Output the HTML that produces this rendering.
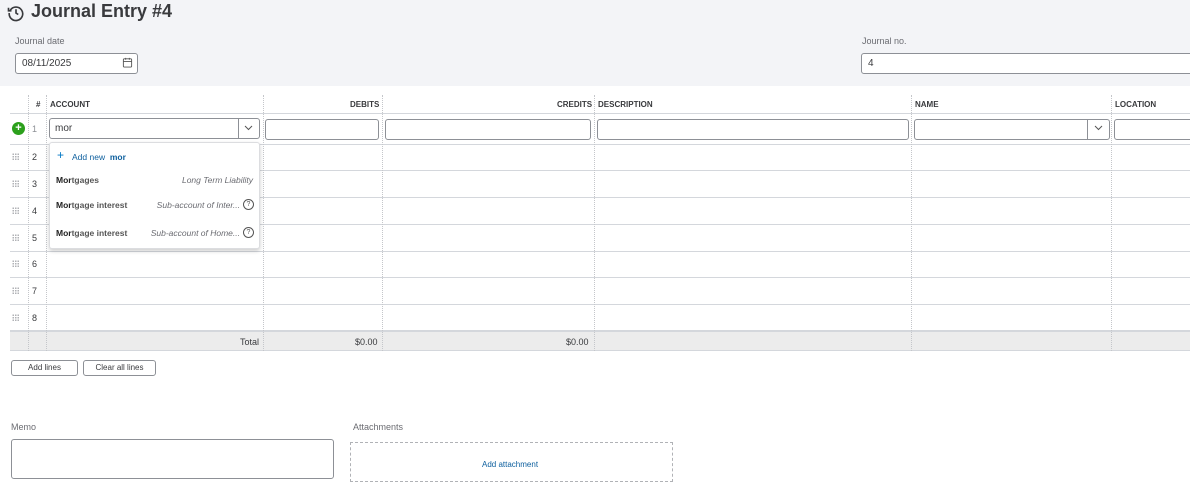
<!DOCTYPE html>
<html><head><style>
*{box-sizing:border-box;margin:0;padding:0}
body{width:1190px;height:473px;overflow:hidden;background:#fff;font-family:"Liberation Sans",sans-serif;color:#393a3d;position:relative}
.a{position:absolute}
.hdr{left:0;top:0;width:1190px;height:86px;background:#f3f4f7}
.lbl{font-size:9px;color:#6b6c72}
.inp{border:1px solid #8d9096;border-radius:3px;background:#fff;font-size:10px;padding-left:6px;line-height:20px}
.vl{width:0;border-left:1px dotted #c4c6ca}
.hl{height:0;border-top:1px solid #d4d7dc;left:10px;width:1180px}
.th{font-size:8px;font-weight:bold;color:#393a3d;top:100px}
.num{font-size:9px;left:32px}
.grip{left:12px;width:7px;height:7px;background-image:radial-gradient(#b0b2b6 0.8px,transparent 0.9px);background-size:2.5px 2.5px}
.btn{border:1px solid #8d9096;border-radius:3px;font-size:8px;text-align:center;line-height:14px;height:16px;color:#393a3d;background:#fff}
.dd{left:49px;top:142px;width:211px;height:107px;background:#fff;border:1px solid #dcdde0;border-radius:3px;box-shadow:0 2px 4px rgba(0,0,0,.2)}
.it{font-size:8.5px;left:6px;font-weight:bold;color:#555}
.it b{color:#222}
.sub{font-size:8.5px;font-style:italic;color:#6b6c72}
.q{width:11px;height:11px;border:1px solid #555;border-radius:50%;font-size:7px;text-align:center;line-height:9px;color:#555}
</style></head><body>
<div class="a hdr"></div>
<svg class="a" style="left:7px;top:4px" width="18" height="18" viewBox="0 0 24 24" fill="none" stroke="#393a3d" stroke-width="2.2"><path d="M4.5 8A9 9 0 1 1 3 12"/><path d="M2 5v4h4"/><path d="M12 7v5l3 2"/></svg>
<div class="a" style="left:31px;top:1px;font-size:18px;font-weight:bold;color:#393a3d">Journal Entry #4</div>
<div class="a lbl" style="left:15px;top:36px">Journal date</div>
<div class="a inp" style="left:15px;top:53px;width:123px;height:21px">08/11/2025</div>
<svg class="a" style="left:122px;top:57px" width="11" height="11" viewBox="0 0 12 12" fill="none" stroke="#555" stroke-width="1"><rect x="1.5" y="2" width="9" height="9" rx="1"/><path d="M1.5 5h9M4 1v2M8 1v2"/></svg>
<div class="a lbl" style="left:862px;top:36px">Journal no.</div>
<div class="a inp" style="left:861px;top:53px;width:340px;height:21px">4</div>

<div class="a hl" style="top:113px"></div>
<div class="a hl" style="top:144px"></div>
<div class="a hl" style="top:170px"></div>
<div class="a hl" style="top:197px"></div>
<div class="a hl" style="top:224px"></div>
<div class="a hl" style="top:251px"></div>
<div class="a hl" style="top:277px"></div>
<div class="a hl" style="top:304px"></div>
<div class="a" style="left:10px;top:330px;width:1180px;height:21px;background:#ececec;border-top:2px solid #d4d7dc;border-bottom:1px solid #d4d7dc"></div>
<div class="a vl" style="left:28px;top:95px;height:256px"></div>
<div class="a vl" style="left:46px;top:95px;height:256px"></div>
<div class="a vl" style="left:263px;top:95px;height:256px"></div>
<div class="a vl" style="left:382px;top:95px;height:256px"></div>
<div class="a vl" style="left:594px;top:95px;height:256px"></div>
<div class="a vl" style="left:911px;top:95px;height:256px"></div>
<div class="a vl" style="left:1111px;top:95px;height:256px"></div>

<div class="a th" style="left:36px">#</div>
<div class="a th" style="left:50px">ACCOUNT</div>
<div class="a th" style="left:350px">DEBITS</div>
<div class="a th" style="left:557px">CREDITS</div>
<div class="a th" style="left:598px">DESCRIPTION</div>
<div class="a th" style="left:915px">NAME</div>
<div class="a th" style="left:1115px">LOCATION</div>

<div class="a" style="left:12px;top:122px;width:13px;height:13px;border-radius:50%;background:#2ca01c;color:#fff;font-size:11px;font-weight:bold;text-align:center;line-height:13px">+</div>
<div class="a num" style="top:124px;color:#8d9096">1</div>
<div class="a inp" style="left:49px;top:118px;width:211px;height:21px;padding-left:5px">mor</div>
<div class="a" style="left:238px;top:119px;width:1px;height:19px;background:#8d9096"></div>
<svg class="a" style="left:244px;top:125px" width="9" height="6" viewBox="0 0 9 6" fill="none" stroke="#555"><path d="M1 1l3.5 3.5L8 1"/></svg>
<div class="a inp" style="left:265px;top:119px;width:114px;height:21px"></div>
<div class="a inp" style="left:385px;top:119px;width:206px;height:21px"></div>
<div class="a inp" style="left:597px;top:119px;width:312px;height:21px"></div>
<div class="a inp" style="left:914px;top:119px;width:196px;height:21px"></div>
<div class="a" style="left:1087px;top:120px;width:1px;height:19px;background:#8d9096"></div>
<svg class="a" style="left:1094px;top:125px" width="9" height="6" viewBox="0 0 9 6" fill="none" stroke="#555"><path d="M1 1l3.5 3.5L8 1"/></svg>
<div class="a inp" style="left:1114px;top:119px;width:90px;height:21px"></div>

<div class="a grip" style="top:153px"></div><div class="a num" style="top:152px">2</div>
<div class="a grip" style="top:180px"></div><div class="a num" style="top:179px">3</div>
<div class="a grip" style="top:207px"></div><div class="a num" style="top:206px">4</div>
<div class="a grip" style="top:234px"></div><div class="a num" style="top:233px">5</div>
<div class="a grip" style="top:260px"></div><div class="a num" style="top:259px">6</div>
<div class="a grip" style="top:287px"></div><div class="a num" style="top:286px">7</div>
<div class="a grip" style="top:314px"></div><div class="a num" style="top:313px">8</div>

<div class="a" style="left:240px;top:337px;font-size:9px">Total</div>
<div class="a" style="left:355px;top:337px;font-size:9px">$0.00</div>
<div class="a" style="left:566px;top:337px;font-size:9px">$0.00</div>

<div class="a dd">
<div class="a" style="left:7px;top:6px;font-size:12px;color:#0077c5;line-height:12px">+</div>
<div class="a" style="left:22px;top:9px;font-size:8.5px;color:#0d5f9e">Add new &nbsp;<b>mor</b></div>
<div class="a it" style="top:32px"><b>Mor</b>tgages</div>
<div class="a sub" style="right:6px;top:32px">Long Term Liability</div>
<div class="a it" style="top:57px"><b>Mor</b>tgage interest</div>
<div class="a sub" style="right:19px;top:57px">Sub-account of Inter...</div>
<div class="a q" style="right:5px;top:56px">?</div>
<div class="a it" style="top:85px"><b>Mor</b>tgage interest</div>
<div class="a sub" style="right:19px;top:85px">Sub-account of Home...</div>
<div class="a q" style="right:5px;top:84px">?</div>
</div>

<div class="a btn" style="left:11px;top:360px;width:67px">Add lines</div>
<div class="a btn" style="left:83px;top:360px;width:73px">Clear all lines</div>

<div class="a lbl" style="left:11px;top:422px">Memo</div>
<div class="a" style="left:11px;top:439px;width:323px;height:40px;border:1px solid #8d9096;border-radius:3px"></div>
<div class="a lbl" style="left:353px;top:422px">Attachments</div>
<div class="a" style="left:350px;top:442px;width:323px;height:40px;border:1px dashed #b0b2b6"></div>
<div class="a" style="left:482px;top:460px;font-size:8px;color:#0d5f9e">Add attachment</div>
</body></html>
